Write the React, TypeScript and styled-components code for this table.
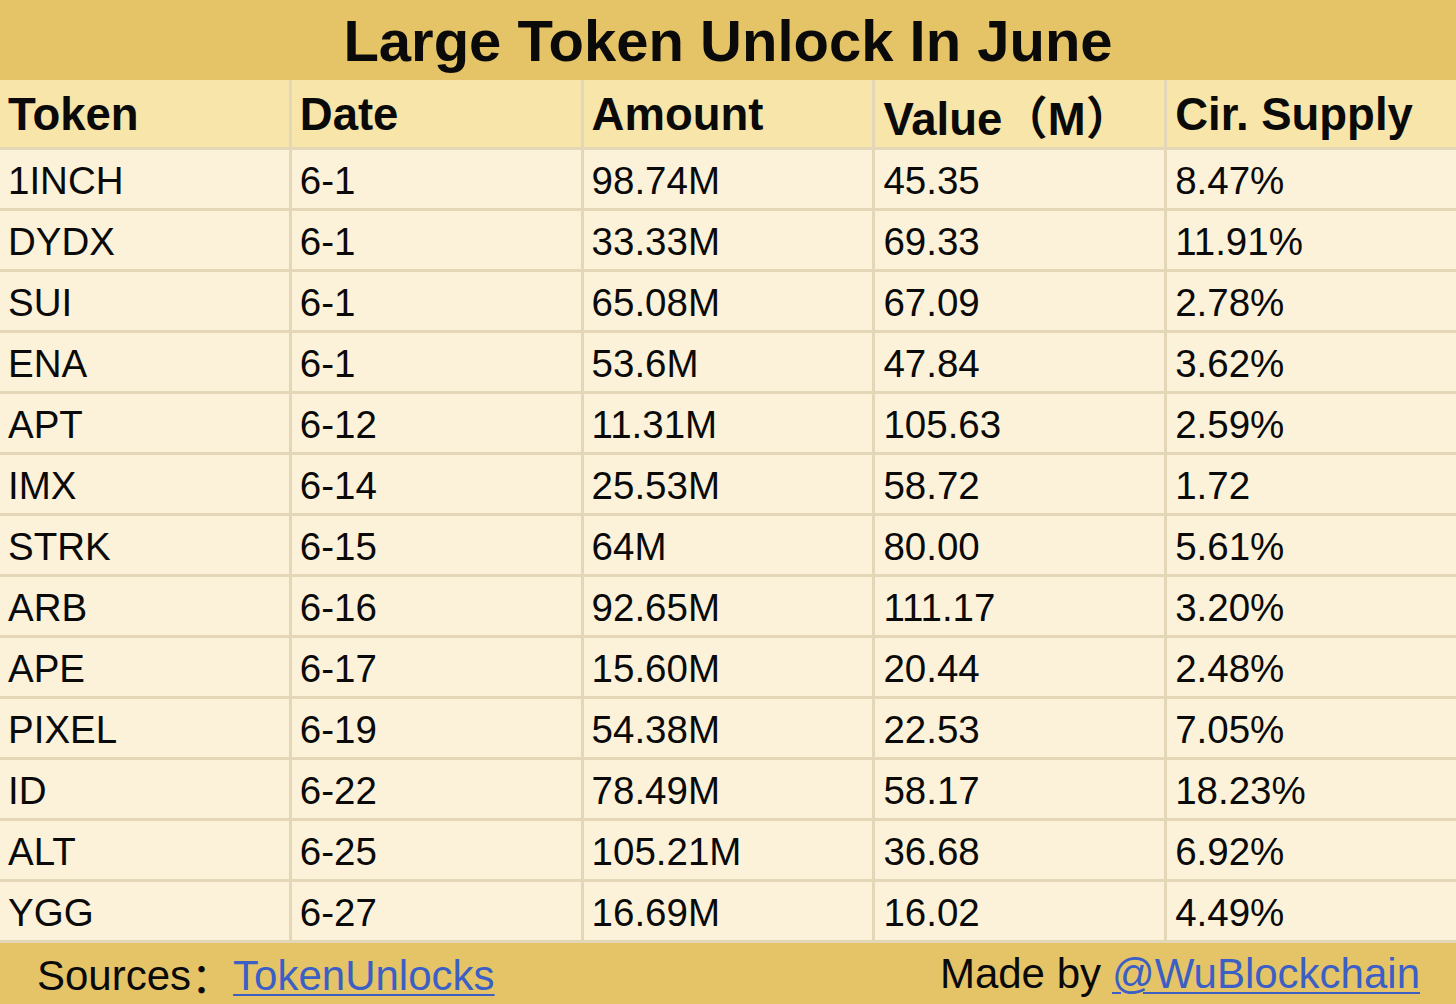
import React from "react";
import styled, { createGlobalStyle } from "styled-components";

const Global = createGlobalStyle`
  html, body { margin: 0; padding: 0; background: #FCF2D9; }
  body { font-family: "Liberation Sans", Arial, "Noto Sans CJK SC", sans-serif; }
`;

const Page = styled.div`
  width: 1456px;
  height: 1004px;
  display: flex;
  flex-direction: column;
  overflow: hidden;
  background: #FCF2D9;
`;

const TitleBar = styled.div`
  height: 80px;
  background: #E5C467;
  display: flex;
  align-items: center;
  justify-content: center;
  font-weight: 700;
  font-size: 58px;
  color: #0a0a0a;
`;

const Table = styled.div`
  display: grid;
  grid-template-columns: repeat(5, 1fr);
  grid-template-rows: 67px repeat(13, 58px);
  gap: 3px;
  background: #E3D7B8;
  padding-bottom: 3px;
`;

const Cell = styled.div<{ $head?: boolean }>`
  display: flex;
  align-items: center;
  padding-left: 8px;
  padding-top: ${(p) => (p.$head ? "2px" : "4px")};
  background: ${(p) => (p.$head ? "#F8E5AA" : "#FCF2D9")};
  font-size: ${(p) => (p.$head ? "45.5px" : "38.5px")};
  font-weight: ${(p) => (p.$head ? 700 : 400)};
  color: #0a0a0a;
  white-space: nowrap;
  overflow: hidden;
`;

const Footer = styled.div`
  flex: 1;
  background: #E5C467;
  display: flex;
  align-items: center;
  justify-content: space-between;
  padding: 0 36px 0 37px;
  font-size: 42px;
  line-height: 1;
  color: #0a0a0a;
`;

const FootText = styled.span`
  display: flex;
  align-items: baseline;
  line-height: 1;
`;

const Link = styled.a`
  color: #3B5FC4;
  text-decoration: underline;
  text-decoration-thickness: 2px;
  text-underline-offset: 4px;
`;

const Colon = styled.span`
  font-family: "Noto Sans CJK SC", sans-serif;
  line-height: 1;
  position: relative;
  top: 3px;
`;

const Space = styled.span`
  display: inline-block;
  width: 11px;
`;

const headers = ["Token", "Date", "Amount", "Value（M）", "Cir. Supply"];

const rows: string[][] = [
  ["1INCH", "6-1", "98.74M", "45.35", "8.47%"],
  ["DYDX", "6-1", "33.33M", "69.33", "11.91%"],
  ["SUI", "6-1", "65.08M", "67.09", "2.78%"],
  ["ENA", "6-1", "53.6M", "47.84", "3.62%"],
  ["APT", "6-12", "11.31M", "105.63", "2.59%"],
  ["IMX", "6-14", "25.53M", "58.72", "1.72"],
  ["STRK", "6-15", "64M", "80.00", "5.61%"],
  ["ARB", "6-16", "92.65M", "111.17", "3.20%"],
  ["APE", "6-17", "15.60M", "20.44", "2.48%"],
  ["PIXEL", "6-19", "54.38M", "22.53", "7.05%"],
  ["ID", "6-22", "78.49M", "58.17", "18.23%"],
  ["ALT", "6-25", "105.21M", "36.68", "6.92%"],
  ["YGG", "6-27", "16.69M", "16.02", "4.49%"],
];

export default function App() {
  return (
    <Page>
      <Global />
      <TitleBar>Large Token Unlock In June</TitleBar>
      <Table>
        {headers.map((h) => (
          <Cell key={h} $head>
            {h}
          </Cell>
        ))}
        {rows.map((r, i) =>
          r.map((c, j) => <Cell key={`${i}-${j}`}>{c}</Cell>)
        )}
      </Table>
      <Footer>
        <FootText>
          Sources<Colon>：</Colon>
          <Link href="#">TokenUnlocks</Link>
        </FootText>
        <FootText>
          Made by<Space />
          <Link href="#">@WuBlockchain</Link>
        </FootText>
      </Footer>
    </Page>
  );
}
